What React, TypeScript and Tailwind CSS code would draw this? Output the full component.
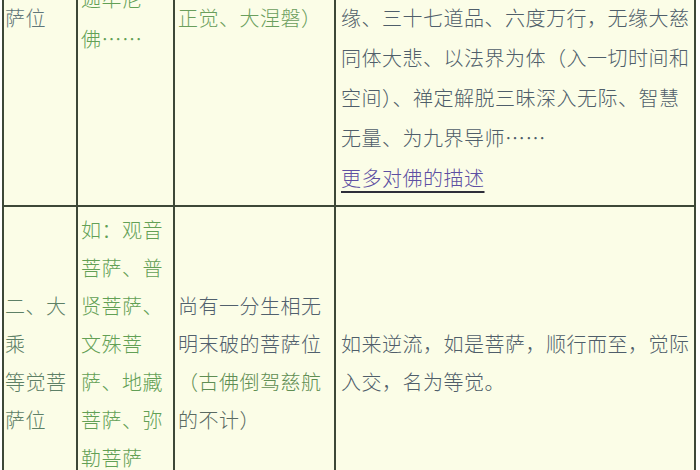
import React from "react";

const font = { fontFamily: '"Noto Sans CJK SC", "Liberation Serif", sans-serif' };

function Lines({ lines, className }: { lines: string[]; className: string }) {
  return (
    <>
      {lines.map((l, i) => (
        <div key={i} className={`whitespace-nowrap ${className}`}>
          {l}
        </div>
      ))}
    </>
  );
}

export default function App() {
  return (
    <div className="w-[700px] h-[470px] overflow-hidden bg-white" style={font}>
      <div className="ml-[2px] w-[694px] bg-[#3d4838] px-[2px] pb-[2px] grid grid-cols-[72px_95px_159px_358px] grid-rows-[205px_312px] gap-[2px] text-[20px] tracking-[0.5px] font-light">
        {/* Row 1 */}
        <div className="bg-[#fbfde7] flex flex-col justify-end pb-[168px] pl-[1px] leading-[38px] overflow-hidden">
          <Lines lines={["萨位"]} className="text-[#5f7679]" />
        </div>
        <div className="bg-[#fbfde7] flex flex-col justify-end pb-[146px] pl-[3px] leading-[40px] overflow-hidden">
          <Lines lines={["迦牟尼", "佛……"]} className="text-[#62a055]" />
        </div>
        <div className="bg-[#fbfde7] flex flex-col justify-end pb-[168px] pl-[3px] leading-[38px] overflow-hidden">
          <Lines lines={["正觉、大涅磐）"]} className="text-[#6a9e5c]" />
        </div>
        <div className="bg-[#fbfde7] flex flex-col justify-end pb-[7px] pl-[5px] leading-[40px] overflow-hidden">
          <Lines
            lines={[
              "缘、三十七道品、六度万行，无缘大慈",
              "同体大悲、以法界为体（入一切时间和",
              "空间）、禅定解脱三昧深入无际、智慧",
              "无量、为九界导师……",
            ]}
            className="text-[#4f5e6a]"
          />
          <div className="whitespace-nowrap">
            <a className="text-[#5d4fa2] underline decoration-[#2e2e3a] underline-offset-[5px]" href="#">
              更多对佛的描述
            </a>
          </div>
        </div>

        {/* Row 2 */}
        <div className="bg-[#fbfde7] flex flex-col justify-center pl-[1px] leading-[38px]">
          <Lines lines={["二、大", "乘", "等觉菩", "萨位"]} className="text-[#5d8066]" />
        </div>
        <div className="bg-[#fbfde7] flex flex-col justify-center pl-[3px] leading-[38px]">
          <Lines
            lines={["如：观音", "菩萨、普", "贤菩萨、", "文殊菩", "萨、地藏", "菩萨、弥", "勒菩萨", "……"]}
            className="text-[#62a055]"
          />
        </div>
        <div className="bg-[#fbfde7] flex flex-col justify-center pl-[3px] leading-[38px]">
          <Lines lines={["尚有一分生相无", "明末破的菩萨位"]} className="text-[#51606d]" />
          <Lines lines={["（古佛倒驾慈航"]} className="text-[#5f8e53]" />
          <Lines lines={["的不计）"]} className="text-[#5a6a62]" />
        </div>
        <div className="bg-[#fbfde7] flex flex-col justify-center pl-[5px] leading-[38px]">
          <Lines lines={["如来逆流，如是菩萨，顺行而至，觉际", "入交，名为等觉。"]} className="text-[#4f5e6a]" />
        </div>
      </div>
    </div>
  );
}
